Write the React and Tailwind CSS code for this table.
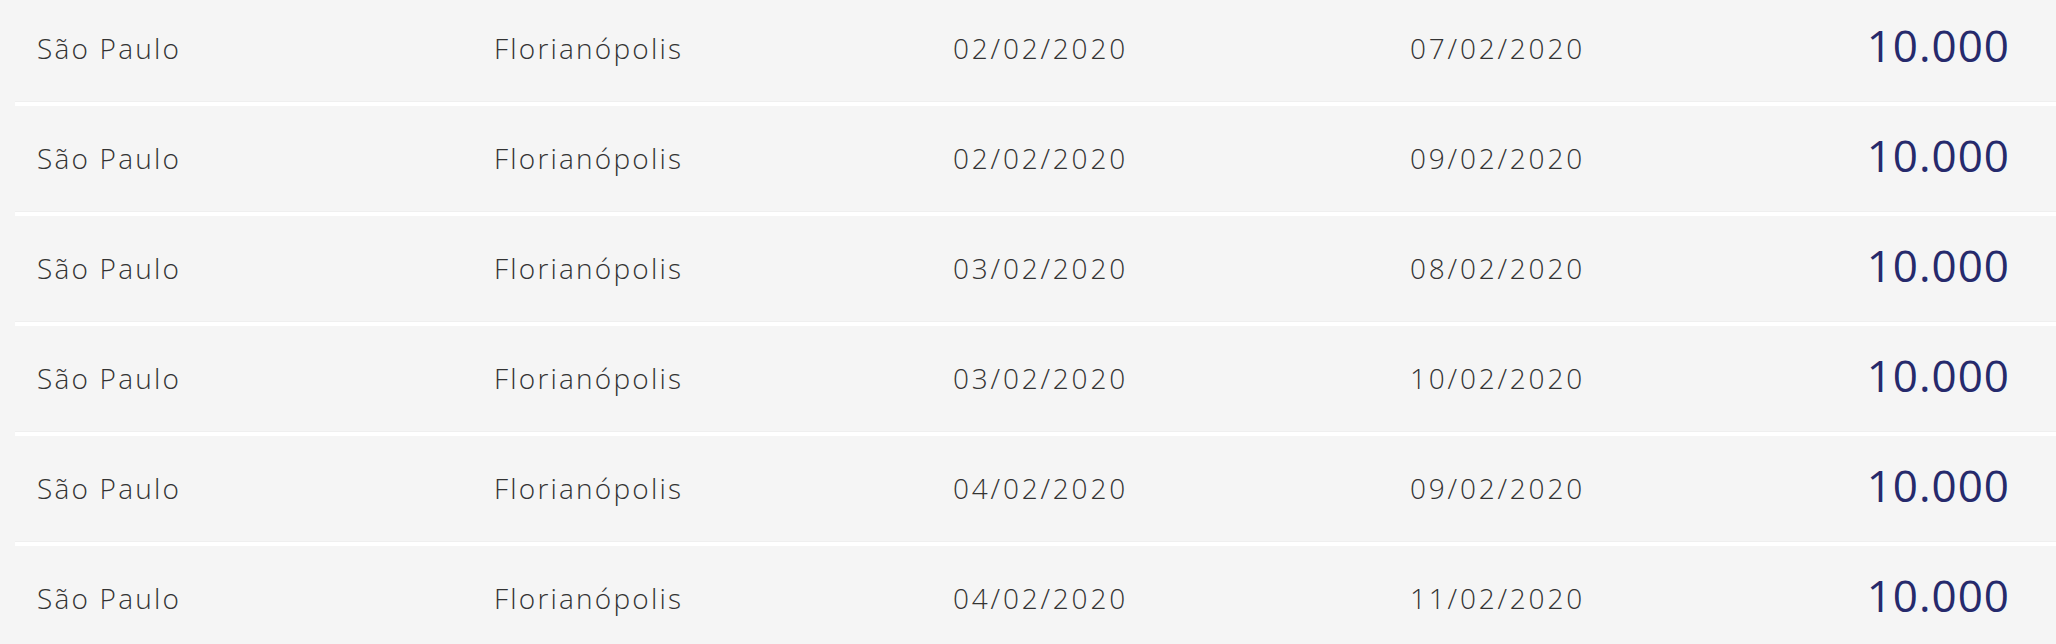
const trips = [
  { from: 'São Paulo', to: 'Florianópolis', out: '02/02/2020', back: '07/02/2020', miles: '10.000' },
  { from: 'São Paulo', to: 'Florianópolis', out: '02/02/2020', back: '09/02/2020', miles: '10.000' },
  { from: 'São Paulo', to: 'Florianópolis', out: '03/02/2020', back: '08/02/2020', miles: '10.000' },
  { from: 'São Paulo', to: 'Florianópolis', out: '03/02/2020', back: '10/02/2020', miles: '10.000' },
  { from: 'São Paulo', to: 'Florianópolis', out: '04/02/2020', back: '09/02/2020', miles: '10.000' },
  { from: 'São Paulo', to: 'Florianópolis', out: '04/02/2020', back: '11/02/2020', miles: '10.000' },
];

const TripRow = ({ trip }) => (
  <div className="grid grid-cols-[457px_459px_457px_1fr_auto] items-center h-[106px] pl-[22px] pr-[46px] pb-[2px] bg-[#f5f5f5] border-b border-[#efefef] text-[28px] font-light tracking-[2.2px] text-[#333333]">
    <span>{trip.from}</span>
    <span>{trip.to}</span>
    <span className="tracking-[2.8px]">{trip.out}</span>
    <span className="tracking-[2.8px]">{trip.back}</span>
    <span className="text-[44px] font-normal tracking-[1px] leading-none text-[#262a6c] -mt-[6px]">{trip.miles}</span>
  </div>
);

export default function App() {
  return (
    <div className="min-h-screen w-full bg-[#f5f5f5] overflow-hidden font-['Open_Sans','Liberation_Sans',sans-serif]">
      <div className="ml-[15px] -mt-1 flex flex-col gap-1 bg-white">
        {trips.map((trip, i) => (
          <TripRow key={i} trip={trip} />
        ))}
      </div>
    </div>
  );
}
